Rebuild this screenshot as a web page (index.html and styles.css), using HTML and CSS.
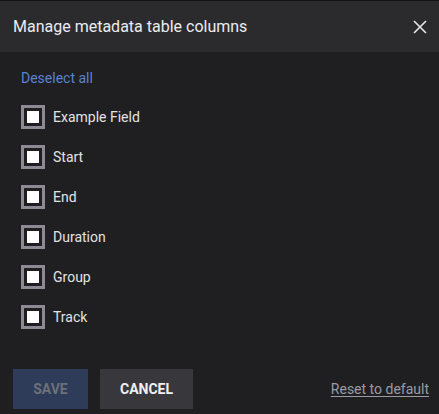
FILE: index.html
```html
<!DOCTYPE html>
<html>
<head>
<meta charset="utf-8">
<link rel="stylesheet" href="styles.css">
</head>
<body>
<div class="dialog">
  <div class="header">
    <span class="title">Manage metadata table columns</span>
    <button class="close" aria-label="Close">
      <svg width="14" height="14" viewBox="0 0 14 14"><path d="M1 1L13 13M13 1L1 13" stroke="#e6e6e8" stroke-width="1.6" fill="none"/></svg>
    </button>
  </div>
  <div class="content">
    <a class="deselect">Deselect all</a>
    <div class="list">
      <label class="row"><span class="box"><span class="fill"></span></span><span class="label">Example Field</span></label>
      <label class="row"><span class="box"><span class="fill"></span></span><span class="label">Start</span></label>
      <label class="row"><span class="box"><span class="fill"></span></span><span class="label">End</span></label>
      <label class="row"><span class="box"><span class="fill"></span></span><span class="label">Duration</span></label>
      <label class="row"><span class="box"><span class="fill"></span></span><span class="label">Group</span></label>
      <label class="row"><span class="box"><span class="fill"></span></span><span class="label">Track</span></label>
    </div>
  </div>
  <div class="footer">
    <button class="btn save">Save</button>
    <button class="btn cancel">Cancel</button>
    <a class="reset">Reset to default</a>
  </div>
</div>
</body>
</html>
```
FILE: styles.css
```css
html, body {
  margin: 0;
  padding: 0;
  background: #1f1f21;
  font-family: Roboto, "Liberation Sans", sans-serif;
}
.dialog {
  width: 439px;
  height: 414px;
  display: flex;
  flex-direction: column;
  border-top: 1px solid #141416;
  box-sizing: border-box;
}
.header {
  height: 51px;
  background: #2b2b2e;
  display: flex;
  align-items: center;
  justify-content: space-between;
  padding: 0 12px 0 13px;
}
.title {
  color: #ececee;
  font-size: 16px;
  line-height: 20px;
}
.close {
  background: none;
  border: 0;
  padding: 0;
  width: 14px;
  height: 14px;
  display: flex;
}
.content {
  padding: 16px 21px 0;
  display: flex;
  flex-direction: column;
}
.deselect {
  color: #5b82d0;
  font-size: 14px;
  line-height: 20px;
  margin-bottom: 9px;
}
.list {
  display: flex;
  flex-direction: column;
}
.row {
  height: 40px;
  display: flex;
  align-items: center;
  gap: 8px;
}
.box {
  width: 24px;
  height: 24px;
  box-sizing: border-box;
  border: 3px solid #8d8a95;
  display: flex;
  align-items: center;
  justify-content: center;
}
.fill {
  width: 12px;
  height: 12px;
  background: #ffffff;
}
.label {
  color: #e2e2e6;
  font-size: 14px;
}
.footer {
  margin-top: 32px;
  padding: 0 10px 0 13px;
  display: flex;
  align-items: center;
  gap: 12px;
}
.btn {
  height: 40px;
  border: 0;
  font-family: Roboto, "Liberation Sans", sans-serif;
  font-weight: 700;
  font-size: 14px;
  text-transform: uppercase;
  padding: 0;
}
.save {
  width: 75px;
  background: #2e3c5a;
  color: #6c7079;
}
.cancel {
  width: 93px;
  background: #38383c;
  color: #f0f0f2;
}
.reset {
  margin-left: auto;
  color: #9a9ba6;
  font-size: 14px;
  text-decoration: underline;
  text-underline-offset: 2px;
}
```
